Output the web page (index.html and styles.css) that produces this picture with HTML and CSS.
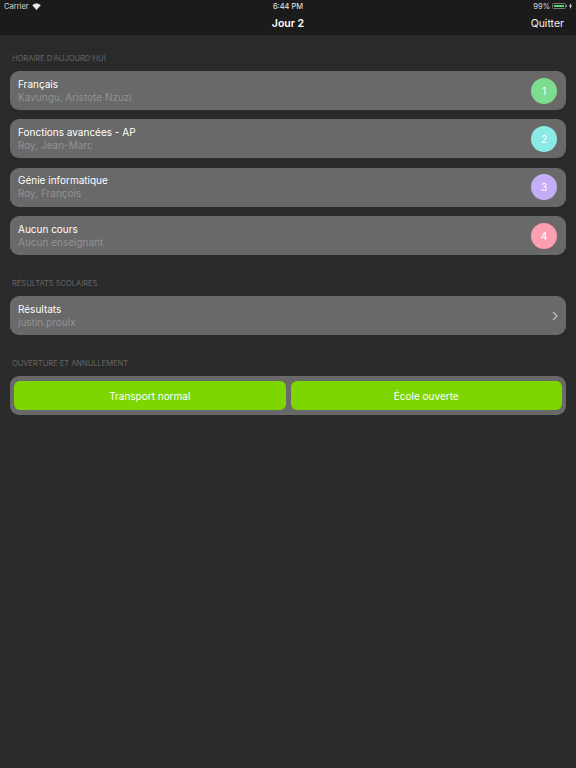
FILE: index.html
```html
<!DOCTYPE html>
<html lang="fr">
<head>
    <meta charset="UTF-8">
    <title>Jour 2</title>
    <link rel="stylesheet" href="styles.css">
</head>
<body>
    <header class="top-bar">
        <div class="status-bar">
            <div class="status-left">
                <span>Carrier</span>
                <svg class="wifi" width="9" height="7" viewBox="0 0 18 14">
                    <path d="M9 14 L0.5 4.6 C5.5 0 12.5 0 17.500 4.600 Z" fill="#e8e8e8"/>
                </svg>
            </div>
            <span class="status-time">6:44 PM</span>
            <div class="status-right">
                <span>99%</span>
                <span class="battery"><span class="battery-level"></span></span>
                <span class="battery-tip"></span>
                <svg class="bolt" width="3" height="6" viewBox="0 0 6 12">
                    <path d="M4 0 L0 7 H2.500 L2 12 L6 5 H3.500 Z" fill="#e8e8e8"/>
                </svg>
            </div>
        </div>
        <nav class="nav-bar">
            <span class="nav-spacer"></span>
            <h1 class="nav-title">Jour 2</h1>
            <span class="nav-action">Quitter</span>
        </nav>
    </header>

    <main class="content">
        <!-- Horaire -->
        <h2 class="section-label">HORAIRE D'AUJOURD'HUI</h2>
        <div class="card-list">
            <div class="card">
                <div class="card-text">
                    <div class="card-title">Français</div>
                    <div class="card-sub">Kavungu, Aristote Nzuzi</div>
                </div>
                <span class="period period-1">1</span>
            </div>
            <div class="card">
                <div class="card-text">
                    <div class="card-title">Fonctions avancées - AP</div>
                    <div class="card-sub">Roy, Jean-Marc</div>
                </div>
                <span class="period period-2">2</span>
            </div>
            <div class="card">
                <div class="card-text">
                    <div class="card-title">Génie informatique</div>
                    <div class="card-sub">Roy, François</div>
                </div>
                <span class="period period-3">3</span>
            </div>
            <div class="card">
                <div class="card-text">
                    <div class="card-title">Aucun cours</div>
                    <div class="card-sub">Aucun enseignant</div>
                </div>
                <span class="period period-4">4</span>
            </div>
        </div>

        <!-- Résultats -->
        <h2 class="section-label">RÉSULTATS SCOLAIRES</h2>
        <div class="card">
            <div class="card-text">
                <div class="card-title">Résultats</div>
                <div class="card-sub">justin.proulx</div>
            </div>
            <svg class="chevron" width="6" height="10" viewBox="0 0 6 10">
                <path d="M1 1 L5 5 L1 9" fill="none" stroke="#c4c4c4" stroke-width="1.200"/>
            </svg>
        </div>

        <!-- Ouverture -->
        <h2 class="section-label">OUVERTURE ET ANNULLEMENT</h2>
        <div class="button-card">
            <button class="green-btn">Transport normal</button>
            <button class="green-btn">École ouverte</button>
        </div>
    </main>
</body>
</html>
```

FILE: styles.css
```css
* {
    box-sizing: border-box;
}

body {
    margin: 0;
    min-height: 768px;
    background: #2a2a2a;
    color: #fff;
    font-family: "Inter", "Liberation Sans", sans-serif;
}

/* Barre du haut */
.top-bar {
    height: 36px;
    background: #1b1b1b;
    border-bottom: 1px solid #262626;
}

.status-bar {
    display: grid;
    grid-template-columns: 1fr auto 1fr;
    align-items: center;
    height: 12px;
    padding: 0 4px;
    font-size: 7.5px;
    color: #d8d8d8;
}

.status-left {
    display: flex;
    align-items: center;
    gap: 3px;
}

.status-time {
    color: #eee;
}

.status-right {
    display: flex;
    align-items: center;
    justify-content: flex-end;
}

.battery {
    display: block;
    width: 14px;
    height: 6px;
    margin-left: 2px;
    padding: 1px;
    border: 0.5px solid #777;
    border-radius: 1.500px;
}

.battery-level {
    display: block;
    height: 100%;
    background: #4cd964;
}

.battery-tip {
    width: 1px;
    height: 2px;
    margin-right: 2px;
    background: #777;
}

.nav-bar {
    display: grid;
    grid-template-columns: 1fr auto 1fr;
    align-items: center;
    height: 23px;
    padding: 0 12px;
}

.nav-title {
    margin: 0;
    font-size: 10.500px;
    font-weight: 600;
}

.nav-action {
    justify-self: end;
    font-size: 10.500px;
    color: #f0f0f0;
}

/* Contenu */
.content {
    display: flex;
    flex-direction: column;
    padding: 0 10px;
}

.section-label {
    margin: 0;
    padding: 18px 2px 8px;
    font-size: 7.500px;
    line-height: 9px;
    font-weight: 400;
    color: #676767;
}

.section-label:not(:first-child) {
    padding-top: 24px;
}

.card-list {
    display: flex;
    flex-direction: column;
    gap: 9.400px;
}

.card {
    display: flex;
    align-items: center;
    justify-content: space-between;
    height: 39px;
    padding: 0 9px 0 8px;
    background: #696969;
    border-radius: 9px;
}

.card-title {
    font-size: 10px;
    line-height: 13px;
    color: #fff;
}

.card-sub {
    font-size: 10px;
    line-height: 13px;
    color: #929292;
}

.period {
    display: flex;
    align-items: center;
    justify-content: center;
    width: 26px;
    height: 26px;
    border-radius: 50%;
    font-size: 10px;
    color: #fff;
}

.period-1 { background: #7ddc8f; }
.period-2 { background: #8aebe6; }
.period-3 { background: #c5aef8; }
.period-4 { background: #fc9fb0; }

.chevron {
    margin-right: -1px;
}

.button-card {
    display: flex;
    gap: 5px;
    height: 39px;
    padding: 5px 4px;
    background: #696969;
    border-radius: 9px;
}

.green-btn {
    flex: 1;
    border: none;
    border-radius: 6px;
    background: #7dd600;
    color: #fff;
    font-family: inherit;
    font-size: 10px;
}
```
